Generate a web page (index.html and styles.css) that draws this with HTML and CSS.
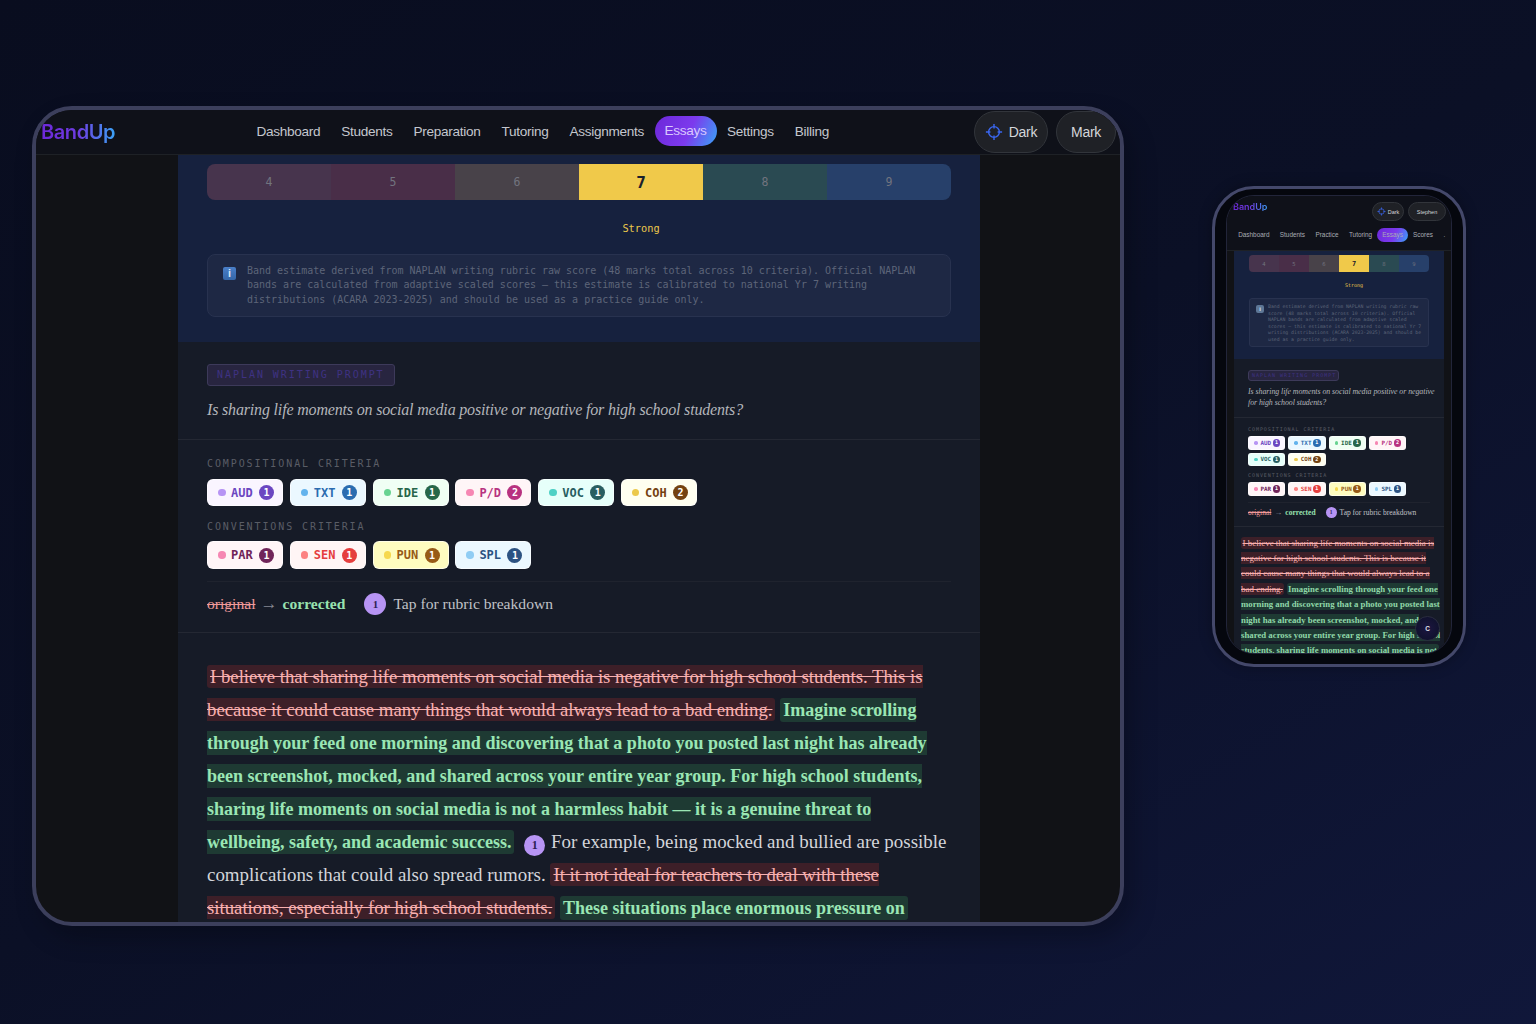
FILE: index.html
```html
<!DOCTYPE html>
<html lang="en">
<head>
<meta charset="utf-8">
<title>BandUp</title>
<link rel="stylesheet" href="styles.css">
</head>
<body>
<section class="device tablet">
  <header class="nav">
    <div class="logo">BandUp</div>
    <nav class="links">
      <a>Dashboard</a><a>Students</a><a>Preparation</a><a>Tutoring</a><a>Assignments</a><a class="active">Essays</a><a>Settings</a><a>Billing</a>
    </nav>
    <div class="actions">
      <span class="pill"><svg class="cross" viewBox="0 0 20 20"><circle cx="10" cy="10" r="6" fill="none" stroke="currentColor" stroke-width="1.6"/><path d="M10 1v5M10 14v5M1 10h5M14 10h5" stroke="currentColor" stroke-width="1.6" fill="none"/></svg>Dark</span>
      <span class="pill">Mark</span>
    </div>
  </header>
  <div class="stage">
    <main class="sheet">
      <div class="hero">
        <div class="bands"><span class="b4">4</span><span class="b5">5</span><span class="b6">6</span><span class="b7">7</span><span class="b8">8</span><span class="b9">9</span></div>
        <div class="bandname"><span>Strong</span></div>
        <div class="info"><span class="i-icon">i</span><p>Band estimate derived from NAPLAN writing rubric raw score (48 marks total across 10 criteria). Official NAPLAN<br>bands are calculated from adaptive scaled scores — this estimate is calibrated to national Yr 7 writing<br>distributions (ACARA 2023-2025) and should be used as a practice guide only.</p></div>
      </div>
      <div class="prompt">
        <span class="tag">NAPLAN WRITING PROMPT</span>
        <p class="question">Is sharing life moments on social media positive or negative for high school students?</p>
      </div>
      <div class="criteria">
        <h4>COMPOSITIONAL CRITERIA</h4>
        <div class="chips">
          <span class="chip aud"><i></i><b>AUD</b><em>1</em></span><span class="chip txt"><i></i><b>TXT</b><em>1</em></span><span class="chip ide"><i></i><b>IDE</b><em>1</em></span><span class="chip pd"><i></i><b>P/D</b><em>2</em></span><span class="chip voc"><i></i><b>VOC</b><em>1</em></span><span class="chip coh"><i></i><b>COH</b><em>2</em></span>
        </div>
        <h4>CONVENTIONS CRITERIA</h4>
        <div class="chips">
          <span class="chip par"><i></i><b>PAR</b><em>1</em></span><span class="chip sen"><i></i><b>SEN</b><em>1</em></span><span class="chip pun"><i></i><b>PUN</b><em>1</em></span><span class="chip spl"><i></i><b>SPL</b><em>1</em></span>
        </div>
        <div class="legend"><s>original</s><span class="arrow">→</span><strong>corrected</strong><span class="num">1</span><span>Tap for rubric breakdown</span></div>
      </div>
      <article class="essay">
        <del>I believe that sharing life moments on social media is negative for high school students. This is<br>because it could cause many things that would always lead to a bad ending.</del> <ins>Imagine scrolling<br>through your feed one morning and discovering that a photo you posted last night has already<br>been screenshot, mocked, and shared across your entire year group. For high school students,<br>sharing life moments on social media is not a harmless habit — it is a genuine threat to<br>wellbeing, safety, and academic success.</ins> <span class="num">1</span> For example, being mocked and bullied are possible<br>complications that could also spread rumors. <del>It it not ideal for teachers to deal with these<br>situations, especially for high school students.</del> <ins>These situations place enormous pressure on</ins>
      </article>
    </main>
  </div>
</section>

<section class="device phone">
  <div class="screen">
    <header class="nav">
      <div class="topline">
        <div class="logo">BandUp</div>
        <div class="actions">
          <span class="pill"><svg class="cross" viewBox="0 0 20 20"><circle cx="10" cy="10" r="6" fill="none" stroke="currentColor" stroke-width="1.6"/><path d="M10 1v5M10 14v5M1 10h5M14 10h5" stroke="currentColor" stroke-width="1.6" fill="none"/></svg>Dark</span>
          <span class="pill">Stephen</span>
        </div>
      </div>
      <nav class="links">
        <a>Dashboard</a><a>Students</a><a>Practice</a><a>Tutoring</a><a class="active">Essays</a><a>Scores</a><a>.</a>
      </nav>
    </header>
    <div class="stage">
      <main class="sheet">
        <div class="hero">
          <div class="bands"><span class="b4">4</span><span class="b5">5</span><span class="b6">6</span><span class="b7">7</span><span class="b8">8</span><span class="b9">9</span></div>
          <div class="bandname"><span>Strong</span></div>
          <div class="info"><span class="i-icon">i</span><p>Band estimate derived from NAPLAN writing rubric raw<br>score (48 marks total across 10 criteria). Official<br>NAPLAN bands are calculated from adaptive scaled<br>scores — this estimate is calibrated to national Yr 7<br>writing distributions (ACARA 2023-2025) and should be<br>used as a practice guide only.</p></div>
        </div>
        <div class="prompt">
          <span class="tag">NAPLAN WRITING PROMPT</span>
          <p class="question">Is sharing life moments on social media positive or negative<br>for high school students?</p>
        </div>
        <div class="criteria">
          <h4>COMPOSITIONAL CRITERIA</h4>
          <div class="chips">
            <span class="chip aud"><i></i><b>AUD</b><em>1</em></span><span class="chip txt"><i></i><b>TXT</b><em>1</em></span><span class="chip ide"><i></i><b>IDE</b><em>1</em></span><span class="chip pd"><i></i><b>P/D</b><em>2</em></span><span class="chip voc"><i></i><b>VOC</b><em>1</em></span><span class="chip coh"><i></i><b>COH</b><em>2</em></span>
          </div>
          <h4>CONVENTIONS CRITERIA</h4>
          <div class="chips">
            <span class="chip par"><i></i><b>PAR</b><em>1</em></span><span class="chip sen"><i></i><b>SEN</b><em>1</em></span><span class="chip pun"><i></i><b>PUN</b><em>1</em></span><span class="chip spl"><i></i><b>SPL</b><em>1</em></span>
          </div>
          <div class="legend"><s>original</s><span class="arrow">→</span><strong>corrected</strong><span class="num">1</span><span>Tap for rubric breakdown</span></div>
        </div>
        <article class="essay">
          <del>I believe that sharing life moments on social media is<br>negative for high school students. This is because it<br>could cause many things that would always lead to a<br>bad ending.</del> <ins>Imagine scrolling through your feed one<br>morning and discovering that a photo you posted last<br>night has already been screenshot, mocked, and<br>shared across your entire year group. For high school<br>students, sharing life moments on social media is not</ins>
        </article>
      </main>
    </div>
    <span class="fab">C</span>
  </div>
</section>
</body>
</html>
```

FILE: styles.css
```css
* { box-sizing: border-box; }
html, body { margin: 0; height: 100%; }
body {
  position: relative;
  width: 1536px;
  height: 1024px;
  overflow: hidden;
  background: linear-gradient(150deg, #090d1f 0%, #0b1026 50%, #10173a 100%);
  font-family: "Liberation Sans", Arial, sans-serif;
}

/* devices sit on a free canvas */
.device { position: absolute; overflow: hidden; }
.tablet {
  left: 32px; top: 106px; width: 1092px; height: 820px;
  border: 4px solid #3c3f5c;
  border-radius: 40px;
  background: #111216;
  display: flex; flex-direction: column;
  box-shadow: 8px 12px 24px rgba(0,0,0,.25);
}
.phone {
  left: 1212px; top: 186px; width: 254px; height: 481px;
  border: 3px solid #44486a;
  border-radius: 42px;
  background: #05070e;
  padding: 6px 11px 10px;
  box-shadow: 0 0 14px rgba(0,0,0,.3);
}
.screen {
  position: relative;
  height: 100%;
  border: 1px solid #22253a;
  border-radius: 28px;
  overflow: hidden;
  background: #111216;
  display: flex; flex-direction: column;
}

/* nav */
.nav {
  flex: none;
  display: flex; align-items: center;
  height: 45px;
  background: #0f1119;
  border-bottom: 1px solid #1e2126;
}
.logo {
  font-family: Inter, sans-serif;
  font-weight: 600;
  font-size: 20px;
  letter-spacing: -.4px;
  padding-right: 2px;
  background: linear-gradient(90deg, #6d28d9 0%, #6d3de0 50%, #38a8f8 100%);
  -webkit-background-clip: text; background-clip: text;
  color: transparent;
}
.tablet .logo { margin-left: 5px; width: 76px; margin-right: -2px; }
.links { display: flex; align-items: center; }
.tablet .links { margin-left: 131px; }
.links a { padding: 0 10.5px; font-size: 13.6px; letter-spacing: -.3px; color: #c4c7ce; white-space: nowrap; line-height: 30px; }
.links a.active {
  padding: 0 10px;
  border-radius: 15px;
  color: #d9c8ff;
  background: linear-gradient(115deg, #6d28d9 0%, #7c3aed 55%, #38a5f8 100%);
  position: relative; top: -1px;
}
.actions { margin-left: auto; display: flex; gap: 8px; }
.tablet .actions { margin-right: 4px; }
.pill {
  display: inline-flex; align-items: center; justify-content: center;
  height: 42px;
  border: 1px solid #32353b;
  border-radius: 21px;
  background: #1f2126;
  color: #d4d6da;
  font-size: 14px;
  letter-spacing: -.3px;
}
.tablet .pill { width: 60px; }
.tablet .pill:first-child { width: 74px; }
.cross { width: 18px; height: 18px; margin-right: 6px; color: #3a66ee; }

/* sheet */
.stage { flex: 1; min-height: 0; overflow: hidden; padding-left: 2px; }
.sheet { margin: 0 auto; width: 802px; height: 100%; background: #161b27; overflow: hidden; }
.hero { background: #16213e; padding: 9px 29px 25px; }
.bands, .bandname { display: grid; grid-template-columns: repeat(6, 1fr); }
.bands { height: 36px; border-radius: 8px; overflow: hidden; }
.bands span {
  display: flex; align-items: center; justify-content: center;
  font-family: "DejaVu Sans Mono", monospace; font-size: 11.5px; color: #72747f;
}
.b4 { background: #47344d; }
.b5 { background: #492e48; }
.b6 { background: #484249; }
.bands .b7 { background: #f0c94a; color: #1a202c; font-size: 16px; font-weight: 700; }
.b8 { background: #2a4a52; }
.b9 { background: #27406a; }
.bandname { padding-top: 22px; height: 54px; font-family: "DejaVu Sans Mono", monospace; font-size: 10.3px; line-height: 12px; color: #ecc94b; }
.bandname span { grid-column: 4; text-align: center; }
.info {
  display: flex; gap: 11px;
  height: 63px;
  padding: 8.5px 15px;
  border: 1px solid #28324f;
  border-radius: 8px;
  background: #1e2844;
}
.i-icon {
  flex: none; width: 13px; height: 13px; margin-top: 3px;
  border-radius: 2px;
  background: linear-gradient(#4a7fc8, #3566a8);
  color: #d8e4f4;
  font: 700 11px/13px "Liberation Sans", sans-serif;
  text-align: center;
}
.info p {
  margin: 0;
  font-family: "DejaVu Sans Mono", monospace;
  font-size: 10px; line-height: 14.5px;
  color: #5d6579;
  white-space: nowrap;
}
.prompt { padding: 22px 29px 18px; border-bottom: 1px solid #242833; }
.tag {
  display: inline-block; height: 22px;
  padding: 0 9px;
  border: 1px solid #3d3a5a;
  border-radius: 3px;
  background: #282540;
  color: #3f3283;
  font-family: "DejaVu Sans Mono", monospace;
  font-size: 10px; line-height: 20px; letter-spacing: 1.96px;
}
.question {
  margin: 13px 0 0;
  font-family: "Liberation Serif", serif; font-style: italic;
  font-size: 16px; line-height: 22px; letter-spacing: -.17px;
  color: #b3b5ba;
  white-space: nowrap;
}
.criteria { padding: 0 29px; border-bottom: 1px solid #242833; }
.criteria h4 {
  margin: 0; padding-top: 17px;
  font-family: "DejaVu Sans Mono", monospace; font-weight: 400;
  font-size: 10px; line-height: 14px; letter-spacing: 1.9px;
  color: #5a5d66;
}
.chips + h4 { padding-top: 14px; }
.chips { display: flex; flex-wrap: wrap; gap: 6.8px; margin-top: 8px; }
.chips + h4 + .chips { margin-top: 7px; }
.chip {
  display: flex; align-items: center;
  width: 76px; height: 27px;
  padding: 0 8px 0 10px;
  border: 1px solid rgba(255,255,255,.6);
  border-radius: 6px;
  font-family: "DejaVu Sans Mono", monospace;
  font-size: 12px;
}
.chip i { width: 7.5px; height: 7.5px; border-radius: 50%; margin-right: 5.5px; flex: none; }
.chip b { font-weight: 700; }
.chip em {
  margin-left: auto;
  width: 15px; height: 15px; border-radius: 50%;
  color: #fff; font-style: normal; font-weight: 700; font-size: 10px;
  line-height: 15px; text-align: center;
}
.aud { background: #faf5ff; color: #6b46c1; } .aud i { background: #b794f4; } .aud em { background: #6b46c1; }
.txt { background: #ebf8ff; color: #2b6cb0; } .txt i { background: #63b3ed; } .txt em { background: #2b6cb0; }
.ide { background: #f0fff4; color: #276749; } .ide i { background: #68d391; } .ide em { background: #276749; }
.pd  { background: #fff5f7; color: #b83280; } .pd i  { background: #f687b3; } .pd em  { background: #b83280; }
.voc { background: #e6fffa; color: #285e61; } .voc i { background: #4fd1c5; } .voc em { background: #285e61; }
.coh { background: #fffff0; color: #744210; } .coh i { background: #ecc94b; } .coh em { background: #744210; }
.par { background: #fff5f7; color: #702459; } .par i { background: #f687b3; } .par em { background: #702459; }
.sen { background: #fff5f5; color: #e53e3e; } .sen i { background: #fc8181; } .sen em { background: #e53e3e; }
.pun { background: #fefcbf; color: #975a16; } .pun i { background: #f6d84e; } .pun em { background: #975a16; }
.spl { background: #ebf8ff; color: #2c5282; } .spl i { background: #90cdf4; } .spl em { background: #2c5282; }
.criteria .chip { flex: none; }
.chips + h4 + .chips .chip { height: 28px; }
.legend {
  display: flex; align-items: center;
  margin-top: 12px; height: 51px; padding-bottom: 7px;
  border-top: 1px solid #1f232e;
  font-family: "Liberation Serif", serif; font-size: 15.6px;
  color: #c0c2c7;
}
.legend s { color: #f19a9a; }
.legend .arrow { margin: 0 5px; color: #858892; font-size: 17px; }
.legend strong { color: #98e2b0; margin-right: 19px; }
.legend .num { width: 22px; height: 22px; margin-right: 7px; line-height: 22px; font-size: 11px; }
.num {
  display: inline-block; text-align: center;
  border-radius: 50%;
  background: #b794f4; color: #2d1f52;
  font-family: "Liberation Serif", serif; font-weight: 700;
}
.essay {
  padding: 27px 29px 0;
  font-family: "Liberation Serif", serif;
  font-size: 18.95px; line-height: 33px;
  color: #d3d5da;
  white-space: nowrap;
}
.essay del, .essay ins { line-height: 1; }
.essay del {
  color: #f9b0b0; background: #3d1f28; text-decoration: line-through;
  font-size: 18.76px;
  padding: 1px 3px; border-radius: 3px;
}
.essay ins {
  color: #9ae6b4; background: #1e3a33; text-decoration: none; font-weight: 700;
  font-size: 18px;
  padding: 2px 3px; border-radius: 3px;
}
.essay .num { width: 21px; height: 21px; line-height: 21px; font-size: 12px; margin: 0 1px 0 5px; vertical-align: -1px; }

/* phone scale */
.phone .nav { display: block; height: 55px; padding: 6px 6px 0; }
.phone .topline { display: flex; align-items: flex-start; height: 19px; }
.phone .logo { font-size: 9px; line-height: 9px; letter-spacing: 0; }
.phone .actions { gap: 4px; margin-right: -1px; }
.phone .pill { height: 19px; width: 38px; font-size: 5.5px; letter-spacing: 0; }
.phone .pill:first-child { width: 32px; }
.phone .pill .cross { width: 9px; height: 9px; margin-right: 2px; }
.phone .links { margin-top: 7px; }
.phone .links a { font-size: 6.4px; line-height: 14px; letter-spacing: 0; padding: 0 5.2px; color: #a9acb4; }
.phone .links a.active { margin: 0; padding: 0 5px; border-radius: 7px; top: 0; }
.phone .stage { padding-left: 0; }
.phone .sheet { width: 210px; }
.phone .hero { padding: 4px 15px 12px; }
.phone .bands { height: 17px; border-radius: 4px; }
.phone .bands span { font-size: 5.5px; }
.phone .bands .b7 { font-size: 7px; }
.phone .bandname { height: 26px; padding-top: 9px; font-size: 5px; line-height: 8px; }
.phone .info { height: 49px; gap: 4px; padding: 5px 6px; border-radius: 3px; }
.phone .i-icon { width: 8px; height: 8px; font-size: 6px; line-height: 8px; margin-top: 1px; background: #5e7796; }
.phone .info p { font-size: 4.8px; line-height: 6.6px; }
.phone .prompt { padding: 11px 14px 8.5px; }
.phone .tag { display: block; width: 91px; height: 11px; padding: 0 3px; font-size: 5px; line-height: 9px; letter-spacing: 1px; white-space: nowrap; }
.phone .question { margin-top: 5px; font-size: 7.9px; line-height: 11.3px; letter-spacing: -.06px; }
.phone .criteria { padding: 0 14px; }
.phone .criteria h4 { padding-top: 7.5px; font-size: 5px; line-height: 7px; letter-spacing: .95px; }
.phone .chips + h4 { padding-top: 5.5px; }
.phone .chips, .phone .chips + h4 + .chips { gap: 3px; margin-top: 3.5px; }
.phone .chip { width: 37.3px; height: 13.5px; padding: 0 4px 0 5px; font-size: 5.9px; border-radius: 3px; }
.phone .chips + h4 + .chips .chip { height: 14px; }
.phone .chip i { width: 3.5px; height: 3.5px; margin-right: 3px; }
.phone .chip em { width: 7.5px; height: 7.5px; font-size: 5px; line-height: 7.5px; }
.phone .legend { margin-top: 6px; height: 24px; padding-bottom: 4px; font-size: 7.5px; }
.phone .legend .arrow { margin: 0 3px; font-size: 8px; }
.phone .legend strong { margin-right: 10px; }
.phone .legend .num { width: 11px; height: 11px; line-height: 11px; font-size: 5.5px; margin-right: 3px; }
.phone .essay { padding: 8.5px 7px 0; font-size: 8.98px; line-height: 15.4px; }
.phone .essay del { font-size: 8.98px; padding: 1px 1.5px; }
.phone .essay ins { font-size: 8.78px; padding: 1px 1.5px; color: #90d8a9; }
.fab {
  position: absolute; right: 11px; bottom: 12px;
  width: 25px; height: 25px; border-radius: 50%;
  border: 1px solid #2a2d40;
  background: radial-gradient(circle, #1c1640, #0c1028);
  color: #e2e4ea;
  font: 700 6.5px/23px "Liberation Sans", sans-serif;
  text-align: center;
}
```
